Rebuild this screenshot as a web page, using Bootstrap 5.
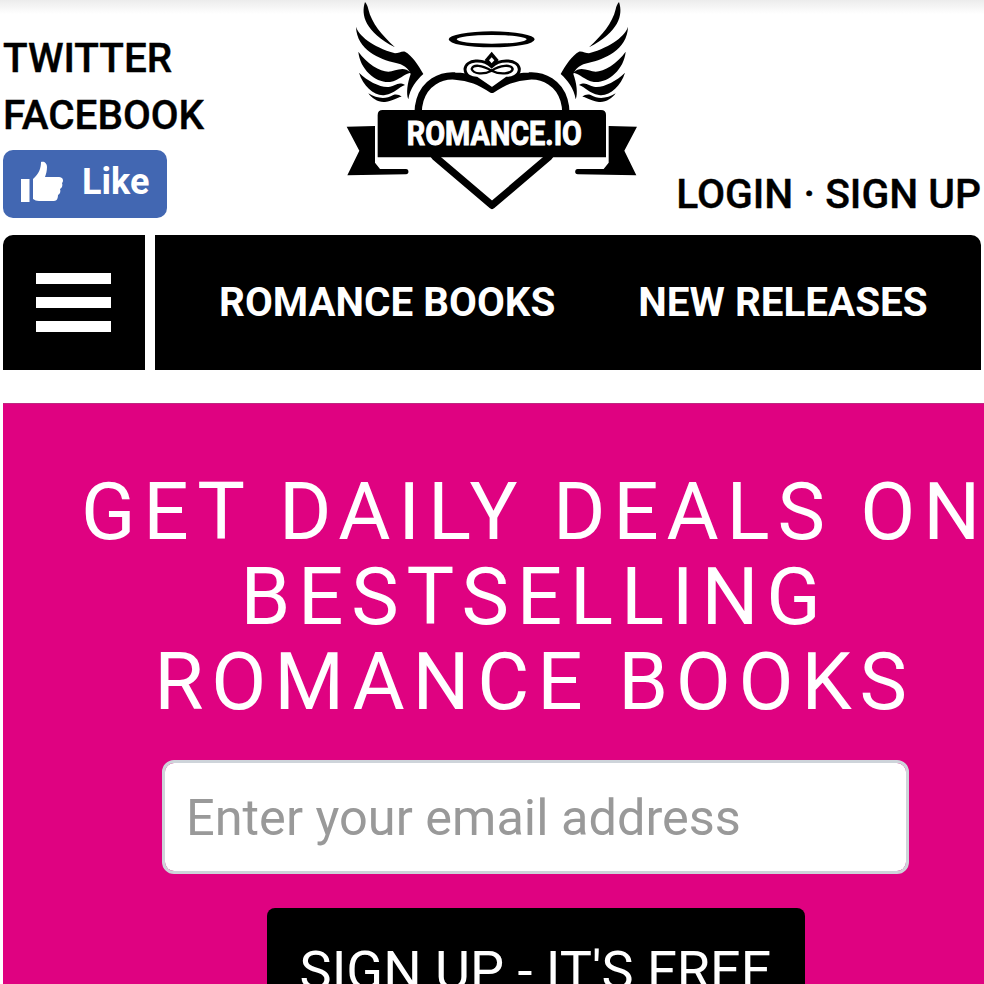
<!DOCTYPE html>
<html lang="en">

<head>
    <meta charset="UTF-8">
    <title>Romance.io</title>
    <link href="https://cdn.jsdelivr.net/npm/bootstrap@5.3.3/dist/css/bootstrap.min.css" rel="stylesheet">
    <style>
        html, body {
            height: 984px;
            overflow: hidden;
        }

        body {
            font-family: Roboto, "Liberation Sans", sans-serif;
            background: #fff linear-gradient(#ececec, #fff 14px) no-repeat;
            padding: 0 3px;
            color: #000;
        }

        .site-head {
            height: 235px;
        }

        .social-col {
            width: 337px;
            padding-top: 30px;
        }

        .social-link {
            display: block;
            font-size: 40.4px;
            line-height: 57px;
            font-weight: 500;
            -webkit-text-stroke: .4px #000;
            color: #000;
            text-decoration: none;
            white-space: nowrap;
        }

        .like-btn {
            width: 164px;
            height: 68px;
            margin-top: 6px;
            background: #4267b2;
            border-radius: 10px;
            color: #fff;
            font-size: 36px;
            font-weight: 700;
            padding-left: 17px;
            gap: 18px;
        }

        .like-btn svg {
            margin-bottom: 4px;
        }

        .like-btn span {
            margin-bottom: 5px;
        }

        .logo-img {
            width: 310px;
            height: 220px;
        }

        .login-links {
            padding-bottom: 16px;
            font-size: 40.8px;
            line-height: 50px;
            font-weight: 500;
            -webkit-text-stroke: .4px #000;
            white-space: nowrap;
        }

        .menu-bar {
            height: 135px;
            gap: 10px;
        }

        .burger-box {
            width: 142px;
            background: #000;
            border-top-left-radius: 10px;
            gap: 13px;
            padding-right: 2px;
        }

        .burger-box span {
            width: 75px;
            height: 11px;
            background: #fff;
        }

        .menu-main {
            background: #000;
            border-top-right-radius: 10px;
            padding: 2px 0 0 64px;
            gap: 83px;
        }

        .menu-main a {
            color: #fff;
            font-size: 40.4px;
            font-weight: 700;
            text-decoration: none;
            white-space: nowrap;
        }

        .deal-box {
            margin: 33px -3px 0 0;
            height: 700px;
            background: #df0281;
            border-top: 1px solid #bd2a80;
            padding: 66px 3px 0 85px;
            color: #fff;
        }

        .deal-title {
            font-family: Roboto, sans-serif;
            font-size: 80px;
            line-height: 85px;
            font-weight: 400;
            letter-spacing: 7.8px;
            margin: 0 -8px 0 -8px;
            white-space: nowrap;
        }

        .deal-form {
            width: 747px;
            margin: 0 0 0 74px;
        }

        .deal-input {
            height: 114px;
            margin-top: 35px;
            font-size: 50.5px;
            padding: 0 0 0 21px;
            border: 3px solid #ced4da;
            border-radius: 12px;
            color: #999;
        }

        .deal-input::placeholder {
            color: #999;
        }

        .deal-btn {
            display: block;
            width: 538px;
            height: 120px;
            margin: 34px auto 0;
            background: #000;
            color: #fff;
            border: 0;
            border-radius: 8px;
            font-size: 54px;
            white-space: nowrap;
            padding: 4px 0 0;
        }

        .deal-btn:hover {
            background: #000;
            color: #fff;
        }
    </style>
</head>

<body>
    <header class="site-head d-flex">
        <div class="social-col">
            <a href="#" class="social-link">TWITTER</a>
            <a href="#" class="social-link">FACEBOOK</a>
            <div class="like-btn d-flex align-items-center">
                <svg width="44" height="44" viewBox="0 0 44 44" fill="#fff">
                    <rect x="1" y="19" width="8.5" height="23" />
                    <path d="M13 19C19 14 21 8 21 2c3-1 6 1 6 5 0 4-1 7-2 10h14c4 0 5 4 3 6 1 2 0 5-2 6 1 2 0 5-2 6 0 3-1 6-4 6H19c-3 0-4-1-6-2z" />
                </svg>
                <span>Like</span>
            </div>
        </div>
        <div class="logo-box">
            <svg class="logo-img" viewBox="0 0 930 660">
                <defs>
                    <g id="wing">
                        <path d="M75 6C62 45 75 95 165 142 125 105 95 70 85 28 83 18 80 12 75 6z" />
                        <path d="M48 80C55 105 95 140 165 160 175 160 185 153 195 155 215 165 235 195 250 222 230 240 210 265 205 298 198 280 202 250 212 222 205 205 190 192 165 188 120 178 50 150 48 80z" />
                        <path d="M55 155C80 190 120 215 145 215 165 215 190 195 212 218 190 222 180 240 150 246 110 250 60 210 55 155z" />
                        <path d="M57 218C85 245 125 265 150 260 165 258 175 243 195 255 175 262 165 280 135 285 105 290 70 260 57 218z" />
                        <path d="M85 280C110 295 135 300 160 285 170 282 178 285 185 290 170 292 160 302 135 306 115 308 95 295 85 280z" />
                    </g>
                    <g id="tail">
                        <path d="M20 380 105 378V488L120 507H198C208 507 208 523 198 523L22 526 58 452z" />
                    </g>
                </defs>
                <use href="#wing" />
                <use href="#wing" transform="translate(912 0) scale(-1 1)" />
                <ellipse cx="455" cy="118" rx="129" ry="24" />
                <ellipse cx="455" cy="118" rx="105" ry="13" fill="#fff" />
                <path d="M456 616 285 470C240 420 225 350 240 300 255 250 300 225 345 228 390 230 420 245 456 268 492 245 522 230 567 228 612 225 657 250 672 300 687 350 672 420 627 470z" fill="#fff" stroke="#000" stroke-width="22" stroke-linejoin="round" />
                <path d="M455 200C430 175 378 178 375 207 376 228 395 235 410 235L456 266 500 235C515 235 538 228 538 207 535 178 480 175 455 200z" fill="#fff" stroke="#000" stroke-width="9" />
                <path d="M395 207C400 192 425 195 455 212 480 225 515 222 518 207 515 192 480 195 455 212 430 225 400 222 395 207z" fill="none" stroke="#000" stroke-width="7" />
                <path d="M455 155 476 180 455 203 434 180z" />
                <path d="M455 172 463 181 455 190 447 181z" fill="#fff" />
                <use href="#tail" />
                <use href="#tail" transform="translate(911 0) scale(-1 1)" />
                <path d="M113 345Q113 330 128 330H783Q798 330 798 345V472H113z" />
                <text x="200" y="434" font-family="Roboto, sans-serif" font-weight="700" font-size="100" fill="#fff" stroke="#fff" stroke-width="3" textLength="526" lengthAdjust="spacingAndGlyphs">ROMANCE.IO</text>
            </svg>
        </div>
        <div class="login-links ms-auto align-self-end">LOGIN · SIGN UP</div>
    </header>

    <nav class="menu-bar d-flex">
        <div class="burger-box d-flex flex-column align-items-center justify-content-center">
            <span></span>
            <span></span>
            <span></span>
        </div>
        <div class="menu-main flex-grow-1 d-flex align-items-center">
            <a href="#">ROMANCE BOOKS</a>
            <a href="#">NEW RELEASES</a>
        </div>
    </nav>

    <section class="deal-box">
        <h1 class="deal-title text-center mb-0">GET DAILY DEALS ON<br>BESTSELLING<br>ROMANCE BOOKS</h1>
        <form class="deal-form">
            <input type="email" class="form-control deal-input" placeholder="Enter your email address">
            <button type="button" class="btn deal-btn">SIGN UP - IT'S FREE</button>
        </form>
    </section>

    <script src="https://cdn.jsdelivr.net/npm/bootstrap@5.3.3/dist/js/bootstrap.bundle.min.js"></script>
</body>

</html>
